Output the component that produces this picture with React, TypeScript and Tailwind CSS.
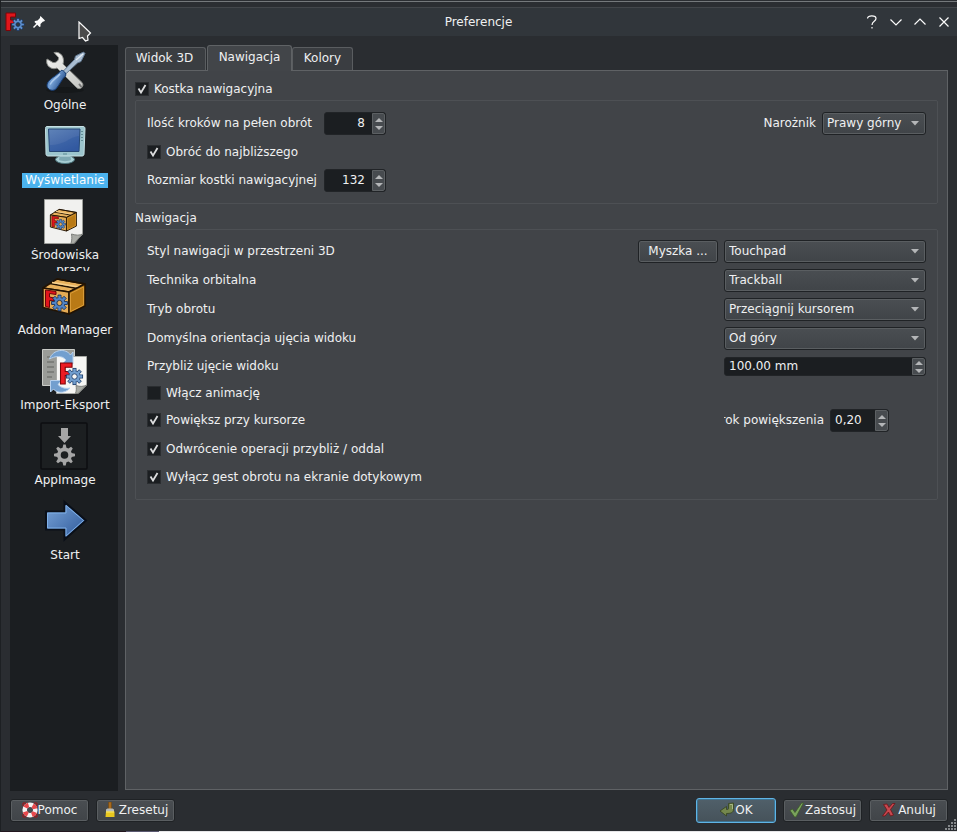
import type { ReactNode } from 'react';

const BLUE = '#729fcf';

function CogShape({ fill, stroke, hole }: { fill: string; stroke: string; hole: string }) {
  return (
    <g>
      <g fill={fill} stroke={stroke} strokeWidth="1">
        {[0, 45, 90, 135].map((a) => (
          <rect key={a} x="-1.7" y="-9" width="3.4" height="18" transform={`rotate(${a})`} />
        ))}
      </g>
      <circle r="6.2" fill={fill} stroke={stroke} strokeWidth="0.8" />
      <g fill={fill}>
        {[0, 45, 90, 135].map((a) => (
          <rect key={a} x="-1.2" y="-8" width="2.4" height="16" transform={`rotate(${a})`} />
        ))}
      </g>
      <circle r="3" fill={hole} stroke={stroke} strokeWidth="1" />
    </g>
  );
}

const F_PATH = 'M0 0H11V4H4.5V8H9V12H4.5V20H0Z';

function AppLogo() {
  return (
    <svg width="20" height="20" viewBox="0 0 20 20" aria-hidden="true">
      <path d="M1 1H10.500V5H5.500V8H9V11.500H5.500V18.500H1Z" fill="#e0161b" stroke="#7d0408" />
      <g transform="translate(13 12.500) scale(.68)">
        <CogShape fill="#5f8fcb" stroke="#16335f" hole="#31363b" />
      </g>
    </svg>
  );
}

function ToolsIcon() {
  return (
    <svg width="48" height="48" viewBox="0 0 48 48" aria-hidden="true">
      <defs>
        <linearGradient id="steel" x1="0" y1="0" x2="1" y2="1">
          <stop offset="0" stopColor="#f4f4f2" />
          <stop offset="1" stopColor="#c4c5c2" />
        </linearGradient>
        <linearGradient id="handle" x1="0" y1="0" x2="1" y2="0.600">
          <stop offset="0" stopColor="#2a5a9c" />
          <stop offset="0.450" stopColor="#77a3d8" />
          <stop offset="1" stopColor="#1e4683" />
        </linearGradient>
      </defs>
      <ellipse cx="25" cy="43" rx="19" ry="3" fill="#15181a" />
      <path d="M7 12C5 19 12 23.500 17 21L36.500 40.500C40 44 45 39 42 35.500L23 17C25 11 21 4 14 5.500L18.500 10.500C19 13.500 16 16 13 15.500Z" fill="url(#steel)" stroke="#8b8d89" />
      <path d="M39.500 37.500L41 39.500" stroke="#777" strokeWidth="2" strokeLinecap="round" />
      <path d="M35.500 9L43.500 5L45 6.500L41 14.500L37.500 16L23.500 29L21 26.500L34.500 12.500Z" fill="#a9bdd2" stroke="#637991" />
      <path d="M36 13L43 7" stroke="#e6eef5" strokeWidth="1.200" />
      <path d="M21 23.500C23 22.500 27 26.500 25.500 29C22 32 20 37 16 42C12 45.500 5 41.500 7.500 36C10 31 17 29 21 23.500Z" fill="url(#handle)" stroke="#163d75" />
      <path d="M20 27C17 31 12 33 10 37.500" stroke="#a9c8ec" strokeWidth="1.500" fill="none" />
    </svg>
  );
}

function MonitorIcon() {
  return (
    <svg width="48" height="48" viewBox="0 0 48 48" aria-hidden="true">
      <defs>
        <linearGradient id="screen" x1="0" y1="0" x2="0.600" y2="1">
          <stop offset="0" stopColor="#5f83b8" />
          <stop offset="1" stopColor="#3a5ea3" />
        </linearGradient>
      </defs>
      <g transform="translate(1 0)">
        <ellipse cx="24" cy="37.500" rx="9.500" ry="4" fill="#a8ced4" stroke="#4e7880" />
        <path d="M19 31H29L30 38C27 39.500 21 39.500 18 38Z" fill="#7fa9b3" />
        <path d="M6 4.500H42C43.500 4.500 44 5.500 44 6.500L43 32C43 33.500 42 34 41 34H7C6 34 5 33.500 5 32L4.500 6.500C4.500 5 5 4.500 6 4.500Z" fill="#9cc5cd" stroke="#c6e0e4" />
        <path d="M7.500 7H39L38 29.500H8.500Z" fill="url(#screen)" stroke="#274875" />
        <path d="M8.500 29H38L38 14C28 15 25 23 8.500 23Z" fill="#22509a" opacity="0.300" />
        <path d="M41 9V20" stroke="#527c84" strokeWidth="1.500" strokeDasharray="1 2" />
        <path d="M22 32H26" stroke="#5e8b93" />
      </g>
    </svg>
  );
}

function BoxShape() {
  return (
    <g strokeLinejoin="round">
      <path d="M3 12L17 3L45 8L29 16Z" fill="#e9b15c" stroke="#221303" strokeWidth="1.500" />
      <path d="M10 7.500L37 12.500M17 3L45 8" stroke="#221303" strokeWidth="1.500" />
      <path d="M12 6.500L39 11" stroke="#f6d08e" strokeWidth="1.500" />
      <path d="M3 12L29 16V38L3 31.500Z" fill="#e5ab55" stroke="#221303" strokeWidth="1.500" />
      <path d="M29 16L45 8V30L29 38Z" fill="#b97a16" stroke="#221303" strokeWidth="1.500" />
      <path d="M30.500 17.500L43.500 11V29L30.500 35.500Z" fill="none" stroke="#d99b37" />
      <path d="M5.500 14L16 15.500V18.500L9.500 17.500V21L14 22V25L9.500 24.500V31.500L5.500 30.500Z" fill="#e3151c" stroke="#6a0508" />
      <g transform="translate(19.500 27) scale(.88)">
        <CogShape fill="#5384c4" stroke="#132e58" hole="#e5ab55" />
      </g>
    </g>
  );
}

function AddonIcon() {
  return (
    <svg width="48" height="48" viewBox="0 0 48 48" aria-hidden="true">
      <g transform="translate(0 4)">
        <BoxShape />
      </g>
    </svg>
  );
}

function WorkbenchIcon() {
  return (
    <svg width="48" height="48" viewBox="0 0 48 48" aria-hidden="true">
      <path d="M4.500 2.500H42.500V37L34 46.500H4.500Z" fill="#f1f1ef" stroke="#9b9d99" />
      <path d="M42.500 37L34 46.500C32 46.500 31 46.500 31 46.500C32 43 32 40 31.500 37C36 38.500 40 38.500 42.500 37Z" fill="#a9aba6" stroke="#7e807c" />
      <g transform="translate(8.500 10.500) scale(.62)">
        <BoxShape />
      </g>
    </svg>
  );
}

function ImportExportIcon() {
  return (
    <svg width="48" height="48" viewBox="0 0 48 48" aria-hidden="true">
      <path d="M2.500 2.500H34.500V38.500H2.500Z" fill="#9a9c98" stroke="#c9cbc7" />
      <path d="M7 10H14M7 15H14M7 20H14M7 25H14M7 30H12" stroke="#747672" strokeWidth="1.500" />
      <path d="M16.500 9.500H46.500V38L38 46.500H16.500Z" fill="#f6f6f4" stroke="#a8aaa6" />
      <path d="M46.500 38L38 46.500H35.500C36.500 43.500 36.500 41 36 38.500C40 40 44 39.500 46.500 38Z" fill="#a7aaa4" stroke="#7e807c" />
      <path d="M9.500 12C13 2 26 1 30.500 8L33 5V17H22L26 13C22 8 15 9 9.500 12Z" fill={BLUE} stroke="#b7d1ee" />
      <path d="M30 41C24 48 15 45 13.500 42L10.500 45V33.500H21.500L18 37.500C21 41 26 42 30 41Z" fill={BLUE} stroke="#b7d1ee" />
      <g transform="translate(20.500 16) scale(1.050)">
        <path d={F_PATH} fill="#ed1c24" stroke="#7d0408" />
      </g>
      <g transform="translate(34.500 29.500) scale(.9)">
        <CogShape fill={BLUE} stroke="#20416f" hole="#f6f6f4" />
      </g>
    </svg>
  );
}

function AppImageIcon() {
  return (
    <svg width="48" height="48" viewBox="0 0 48 48" aria-hidden="true">
      <rect x="1" y="1" width="46" height="46" rx="1" fill="#1c1f21" stroke="#0d0e10" strokeWidth="1.500" />
      <path d="M21 6H28V14H31L24.500 21L18 14H21Z" fill="#a6a6a6" />
      <g transform="translate(24.500 33)" fill="#a6a6a6">
        {[0, 45, 90, 135].map((a) => (
          <path key={a} d="M-2 -7L-1.200 -10.500H1.200L2 -7V7L1.200 10.500H-1.200L-2 7Z" transform={`rotate(${a})`} />
        ))}
        <circle r="7.500" />
        <circle r="3.800" fill="#1c1f21" />
      </g>
    </svg>
  );
}

function StartIcon() {
  return (
    <svg width="48" height="48" viewBox="0 0 48 48" aria-hidden="true">
      <defs>
        <linearGradient id="arrow" x1="0" y1="0" x2="1" y2="1">
          <stop offset="0" stopColor="#7ba6da" />
          <stop offset="1" stopColor="#2b5596" />
        </linearGradient>
      </defs>
      <path d="M6 14.500H24.500V5L46 23.500L24.500 42.500V32.500H6Z" fill="url(#arrow)" stroke="#0a0f18" strokeWidth="2" />
      <path d="M7.500 16H26V8.500L43.500 23.500L26 39V31H7.500Z" fill="none" stroke="#7fb0e8" />
    </svg>
  );
}

function SidebarItem({ icon, label, selected }: { icon: ReactNode; label: ReactNode; selected?: boolean }) {
  return (
    <li>
      <button type="button" className="flex h-[75px] w-full flex-col items-center gap-[3px] overflow-hidden">
        {icon}
        <span className="block h-[23px] overflow-hidden pl-0.5 whitespace-nowrap">
          <span className={selected ? 'block bg-[#4bb3ee] px-[3px] text-[#fcfcfc]' : 'block px-[3px]'}>{label}</span>
        </span>
      </button>
    </li>
  );
}

function Check({ label, checked }: { label: string; checked?: boolean }) {
  return (
    <label className="flex items-start gap-[5px]">
      <span className="relative block size-3.5">
        <input
          type="checkbox"
          defaultChecked={checked}
          className="peer block size-3.5 appearance-none border border-[#2a2d30] bg-[#1b1e21]"
        />
        <svg
          className="pointer-events-none absolute inset-0 hidden peer-checked:block"
          width="14"
          height="14"
          viewBox="0 0 14 14"
          aria-hidden="true"
        >
          <path d="M3.500 6.500L6 10.500L10.500 3" fill="none" stroke="#dcddde" strokeWidth="1.800" />
        </svg>
      </span>
      <span>{label}</span>
    </label>
  );
}

function Spin({ id, value, className, inputClass }: { id: string; value: string; className: string; inputClass: string }) {
  return (
    <span className={`flex shrink-0 overflow-hidden rounded-[3px] border border-[#212427] bg-[#1b1e21] ${className}`}>
      <input id={id} defaultValue={value} className={`min-w-0 flex-1 bg-transparent outline-none ${inputClass}`} />
      <span className="flex w-[13px] flex-col rounded-r-[2px] border border-[#5c6063] bg-[#474b4f]">
        <button type="button" aria-label="Zwiększ" className="flex flex-1 items-end justify-center pb-0.5">
          <svg width="8" height="4" viewBox="0 0 8 4" aria-hidden="true">
            <path d="M0 4L4 0L8 4Z" fill="#b4b6b8" />
          </svg>
        </button>
        <button type="button" aria-label="Zmniejsz" className="flex flex-1 items-start justify-center pt-0.5">
          <svg width="8" height="4" viewBox="0 0 8 4" aria-hidden="true">
            <path d="M0 0L4 4L8 0Z" fill="#b4b6b8" />
          </svg>
        </button>
      </span>
    </span>
  );
}

function Combo({ id, value, className }: { id: string; value: string; className: string }) {
  return (
    <span className={`relative block shrink-0 ${className}`}>
      <select
        id={id}
        className="block h-[23px] w-full appearance-none rounded-[3px] border border-[#1f2225] bg-linear-to-b from-[#4a4e52] to-[#404448] pr-5 pl-1 shadow-[inset_0_0_0_1px_#5a5e61] outline-none"
      >
        <option>{value}</option>
      </select>
      <svg className="pointer-events-none absolute top-[9px] right-[7px]" width="8" height="5" viewBox="0 0 8 5" aria-hidden="true">
        <path d="M0 0H8L4 4.500Z" fill="#b4b6b8" />
      </svg>
    </span>
  );
}

const pushButton =
  'flex h-[23px] items-center justify-center rounded-[3px] border border-[#1f2225] bg-linear-to-b from-[#4a4e52] to-[#404448] whitespace-nowrap shadow-[inset_0_0_0_1px_#5a5e61]';

function ComboRow({ id, label, value, children }: { id: string; label: string; value: string; children?: ReactNode }) {
  return (
    <div className="flex h-[23px] items-center gap-1.5">
      <label htmlFor={id} className="mr-auto">
        {label}
      </label>
      {children}
      <Combo id={id} value={value} className="w-[202px]" />
    </div>
  );
}

function TitleBar() {
  return (
    <header className="grid h-[29px] grid-cols-[1fr_auto_1fr] items-center border-t border-[#43474b] bg-[#31363b] pr-1.5 pl-1">
      <div className="flex items-center gap-[7px]">
        <AppLogo />
        <button type="button" aria-label="Przypnij">
          <svg width="14" height="14" viewBox="0 0 14 14" aria-hidden="true">
            <path d="M8.500 1L13 5.500L12 6.500H11L8.500 9L8.500 11.500L7.500 12L2.500 7L3 6L5.500 5.500L8 3V2Z" fill="#fcfcfc" />
            <path d="M5 9L1.500 12.500" stroke="#fcfcfc" strokeWidth="1.500" />
          </svg>
        </button>
      </div>
      <h1 className="pl-px">Preferencje</h1>
      <div className="flex items-center justify-end gap-2.5">
        <button type="button" aria-label="Pomoc kontekstowa">
          <svg width="14" height="14" viewBox="0 0 14 14" fill="none" stroke="#fcfcfc" strokeWidth="1.200" aria-hidden="true">
            <path d="M2.500 3.500C2.500 0 11 0 11 3.500C11 6.500 7 6 7 10" />
            <path d="M7 12V13.500" />
          </svg>
        </button>
        <button type="button" aria-label="Minimalizuj">
          <svg width="14" height="14" viewBox="0 0 14 14" fill="none" stroke="#fcfcfc" strokeWidth="1.200" aria-hidden="true">
            <path d="M1.500 4.500L7 10L12.500 4.500" />
          </svg>
        </button>
        <button type="button" aria-label="Maksymalizuj">
          <svg width="14" height="14" viewBox="0 0 14 14" fill="none" stroke="#fcfcfc" strokeWidth="1.200" aria-hidden="true">
            <path d="M1.500 9.500L7 4L12.500 9.500" />
          </svg>
        </button>
        <button type="button" aria-label="Zamknij">
          <svg width="14" height="14" viewBox="0 0 14 14" fill="none" stroke="#fcfcfc" strokeWidth="1.200" aria-hidden="true">
            <path d="M2.500 2.500L11.500 11.500M11.500 2.500L2.500 11.500" />
          </svg>
        </button>
      </div>
    </header>
  );
}

function Footer() {
  return (
    <footer className="flex h-10 items-center gap-[7px] pr-[9px] pb-0.5 pl-[9px]">
      <button type="button" className={`${pushButton} w-[79px]`}>
        <svg width="16" height="16" viewBox="0 0 16 16" aria-hidden="true">
          <circle cx="8" cy="8" r="5.300" fill="none" stroke="#f4f4f4" strokeWidth="4.600" />
          <circle cx="8" cy="8" r="5.300" fill="none" stroke="#e8484c" strokeWidth="4.600" strokeDasharray="4 4.325" strokeDashoffset="-2.160" />
          <path d="M1 4V1H4M12 1H15V4M15 12V15H12M4 15H1V12" fill="none" stroke="#a01217" />
        </svg>
        Pomoc
      </button>
      <button type="button" className={`${pushButton} w-[79px]`}>
        <svg width="16" height="16" viewBox="0 0 16 16" aria-hidden="true">
          <path d="M5.500 0H8.500V8H5.500Z" fill="#a86a1c" stroke="#6d420b" strokeWidth="0.500" />
          <path d="M3 7.500L4.500 6.500H9.500L11 7.500V10H3Z" fill="#b9bbb6" />
          <path d="M3 9.500H11.500V15H2.500Z" fill="#e8c71f" />
          <path d="M3 10H11" stroke="#fbe96b" />
        </svg>
        Zresetuj
      </button>
      <button
        type="button"
        className="ml-auto flex h-[25px] w-20 items-center justify-center rounded-[3px] border border-[#5fb4e6] bg-linear-to-b from-[#50606a] to-[#46525a] shadow-[inset_0_0_0_1px_#3d7392]"
      >
        <svg width="16" height="16" viewBox="0 0 16 16" aria-hidden="true">
          <path d="M9.500 1.500L14.500 1V8C14 10.500 12 11.500 7.500 11.500V14L1 9L7.500 4.500V7.500C9.500 7.500 9.500 7 9.500 6Z" fill="#74874d" stroke="#35431e" strokeWidth="0.800" />
          <path d="M11 2.500H13.500V7" fill="none" stroke="#a7b684" />
        </svg>
        OK
      </button>
      <button type="button" className={`${pushButton} w-[79px]`}>
        <svg width="16" height="16" viewBox="0 0 16 16" aria-hidden="true">
          <path d="M1 8.500L3.500 7L6 10.500L12.500 1H14.500L7 15H5.500Z" fill="#7aa35c" stroke="#3c5b28" strokeWidth="0.800" />
        </svg>
        Zastosuj
      </button>
      <button type="button" className={`${pushButton} w-[79px]`}>
        <svg width="16" height="16" viewBox="0 0 16 16" aria-hidden="true">
          <path d="M2.500 2.500L6 2L8 5.500L11.500 1.500H14L9.500 7.500L12.500 13L9.500 14L7.500 10L4 14H1.500L6 8Z" fill="#c8484f" stroke="#6d1117" strokeWidth="0.800" />
        </svg>
        <span className="pl-px">Anuluj</span>
      </button>
    </footer>
  );
}

export default function App() {
  return (
    <div className="relative flex min-h-screen flex-col border-l border-[#1d2023] bg-[#2a2d31] font-['DejaVu_Sans','Liberation_Sans',sans-serif] text-[12px] leading-[15px] text-[#eff0f1]">
      <div className="h-[7px] bg-[#2b2e32] pt-px">
        <div className="h-px bg-[#75797c]" />
      </div>
      <TitleBar />

      <div className="flex flex-1 gap-[7px] pt-[9px] pr-[9px] pl-[9px]">
        <nav aria-label="Kategorie" className="w-[108px] shrink-0 bg-[#1b1e21] pt-0.5">
          <ul>
            <SidebarItem icon={<ToolsIcon />} label="Ogólne" />
            <SidebarItem icon={<MonitorIcon />} label="Wyświetlanie" selected />
            <SidebarItem
              icon={<WorkbenchIcon />}
              label={
                <>
                  Środowiska
                  <span className="block pl-4">pracy</span>
                </>
              }
            />
            <SidebarItem icon={<AddonIcon />} label="Addon Manager" />
            <SidebarItem icon={<ImportExportIcon />} label="Import-Eksport" />
            <SidebarItem icon={<AppImageIcon />} label="AppImage" />
            <SidebarItem icon={<StartIcon />} label="Start" />
          </ul>
        </nav>

        <main className="flex min-w-0 flex-1 flex-col pb-px">
          <div role="tablist" className="flex items-end">
            <button type="button" role="tab" aria-selected="false" className="mr-px h-[23px] w-[81px] rounded-t-[3px] border border-b-0 border-[#5a5d60] bg-[#3a3d41] pr-0.5 pb-px">
              Widok 3D
            </button>
            <button type="button" role="tab" aria-selected="true" className="z-10 -mb-px h-[26px] w-[85px] rounded-t-[3px] border border-b-0 border-[#5f6265] bg-[#424549] pb-0.5">
              Nawigacja
            </button>
            <button type="button" role="tab" aria-selected="false" className="h-[23px] w-[61px] rounded-t-[3px] border border-b-0 border-[#5a5d60] bg-[#3a3d41] pb-px">
              Kolory
            </button>
          </div>

          <div role="tabpanel" className="flex-1 border border-[#5f6265] bg-[#414448] px-[9px] pt-[11px] pb-3">
            <section>
              <Check label="Kostka nawigacyjna" checked />
              <div className="mt-[3px] flex flex-col gap-2.5 rounded-[2px] border border-[#4d5054] px-[11px] pt-[11px] pb-[11px]">
                <div className="flex h-[23px] items-center">
                  <label htmlFor="steps" className="w-[177px]">
                    Ilość kroków na pełen obrót
                  </label>
                  <Spin id="steps" value="8" className="h-[23px] w-[62px]" inputClass="pr-[7px] text-right" />
                  <label htmlFor="corner" className="mr-1.5 ml-auto">
                    Narożnik
                  </label>
                  <Combo id="corner" value="Prawy górny" className="w-[104px]" />
                </div>
                <div className="flex h-3.5 items-center">
                  <Check label="Obróć do najbliższego" checked />
                </div>
                <div className="flex h-[23px] items-center">
                  <label htmlFor="cube-size" className="w-[177px]">
                    Rozmiar kostki nawigacyjnej
                  </label>
                  <Spin id="cube-size" value="132" className="h-[23px] w-[62px]" inputClass="pr-[7px] text-right" />
                </div>
              </div>
            </section>

            <section className="mt-[7px]">
              <h2>Nawigacja</h2>
              <div className="mt-[3px] flex flex-col gap-1.5 rounded-[2px] border border-[#4d5054] px-[11px] pt-2.5 pb-3">
                <ComboRow id="nav-style" label="Styl nawigacji w przestrzeni 3D" value="Touchpad">
                  <button type="button" className={`${pushButton} w-20`}>
                    Myszka ...
                  </button>
                </ComboRow>
                <ComboRow id="orbit" label="Technika orbitalna" value="Trackball" />
                <ComboRow id="rotation" label="Tryb obrotu" value="Przeciągnij kursorem" />
                <ComboRow id="camera" label="Domyślna orientacja ujęcia widoku" value="Od góry" />
                <div className="flex h-[21px] items-center justify-between">
                  <label htmlFor="camera-zoom">Przybliż ujęcie widoku</label>
                  <Spin id="camera-zoom" value="100.00 mm" className="h-[19px] w-[202px]" inputClass="pl-1" />
                </div>
                <div className="flex h-5 items-center">
                  <Check label="Włącz animację" />
                </div>
                <div className="flex h-[23px] items-center justify-between">
                  <Check label="Powiększ przy kursorze" checked />
                  <div className="flex w-[202px] items-center gap-1.5">
                    <label htmlFor="zoom-step" className="flex w-[100px] justify-end overflow-hidden whitespace-nowrap">
                      Krok powiększenia
                    </label>
                    <Spin id="zoom-step" value="0,20" className="h-[23px] w-[59px]" inputClass="pl-1" />
                  </div>
                </div>
                <div className="flex h-[23px] items-center">
                  <Check label="Odwrócenie operacji przybliż / oddal" checked />
                </div>
                <div className="flex h-5 items-center">
                  <Check label="Wyłącz gest obrotu na ekranie dotykowym" checked />
                </div>
              </div>
            </section>
          </div>
        </main>
      </div>

      <Footer />
      <div className="flex h-px">
        <div className="w-[125px] bg-[#22161f]" />
        <div className="w-[33px] bg-[#5a5870]" />
        <div className="flex-1 bg-[#e6e6e8]" />
      </div>

      <svg className="pointer-events-none absolute right-0 bottom-px" width="12" height="12" viewBox="0 0 12 12" fill="#85888b" aria-hidden="true">
        <path d="M9 0h2v2h-2zM6 3h2v2h-2zM9 3h2v2h-2zM3 6h2v2h-2zM6 6h2v2h-2zM9 6h2v2h-2zM0 9h2v2h-2zM3 9h2v2h-2zM6 9h2v2h-2zM9 9h2v2h-2z" />
      </svg>
      <svg className="pointer-events-none absolute top-[21px] left-[77px]" width="14" height="22" viewBox="0 0 14 22" aria-hidden="true">
        <path d="M1 1V17.500L4.500 16.500L7.500 20L10 19L9.500 15L12.500 12Z" fill="#4a4a4a" stroke="#fcfcfc" strokeWidth="1.200" />
      </svg>
    </div>
  );
}
